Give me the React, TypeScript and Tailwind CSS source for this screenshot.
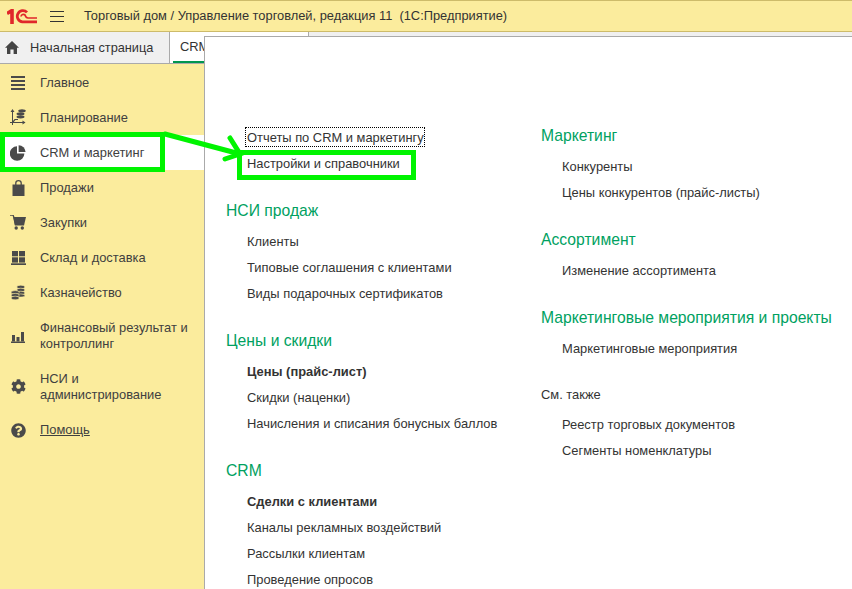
import { FaCog, FaQuestionCircle } from "react-icons/fa";

const iconColor = "#4a4a4a";

function Logo() {
  return (
    <svg width="30" height="15" viewBox="0 0 30 15" fill="none" stroke="#e0262a" className="block">
      <path d="M0 4.5 L5 1.5 V15" strokeWidth="3.6" />
      <path d="M20 3.4 A5.6 5.6 0 1 0 15.5 12.8 H30" strokeWidth="2.8" />
      <path d="M14 7.5 A2.4 2.4 0 0 1 18 6 Q19 9 21 9 H30" strokeWidth="1.7" />
    </svg>
  );
}

function HomeIcon() {
  return (
    <svg width="14" height="13" viewBox="0 0 14 13" fill="#444" className="ml-[5px] mr-[11px]">
      <path d="M7 0 L14 6.8 H12 V13 H8.6 V8.6 H5.4 V13 H2 V6.8 H0 Z" />
    </svg>
  );
}

function MenuIcon() {
  return (
    <svg width="14" height="14" viewBox="0 0 14 14" fill={iconColor}>
      <rect y="0" width="14" height="2" />
      <rect y="4" width="14" height="2" />
      <rect y="8" width="14" height="2" />
      <rect y="12" width="14" height="2" />
    </svg>
  );
}

function PlanIcon() {
  return (
    <svg width="16" height="17" viewBox="0 0 16 17" fill={iconColor}>
      <path d="M2.5 1 V16 M0 13.5 H15" fill="none" stroke={iconColor} strokeWidth="1" />
      <path d="M0.5 3 L2.5 0 L4.5 3 Z M12.5 11.5 L15.5 13.5 L12.5 15.5 Z" />
      <path d="M2.5 13.5 L5 10.5 H8" fill="none" stroke={iconColor} strokeWidth="1.2" />
      <ellipse cx="12" cy="1.8" rx="3.8" ry="1.6" />
      <ellipse cx="10.5" cy="4.8" rx="4" ry="1.6" />
      <ellipse cx="10.5" cy="7.8" rx="4" ry="1.6" />
    </svg>
  );
}

function PieIcon() {
  return (
    <svg width="16" height="16" viewBox="0 0 16 16" fill={iconColor}>
      <path d="M7 1.2 V8.6 H14.4 A7.3 7.3 0 1 1 7 1.2 Z" />
      <path d="M8.6 0.2 A7 7 0 0 1 15.6 7 H8.6 Z" />
    </svg>
  );
}

function BagIcon() {
  return (
    <svg width="13" height="16" viewBox="0 0 13 16" fill={iconColor}>
      <path d="M3.8 6 V3 A2.7 2.3 0 0 1 9.2 3 V6" fill="none" stroke={iconColor} strokeWidth="1.3" />
      <path d="M0.5 4.5 H12.5 V16 H0.5 Z" />
    </svg>
  );
}

function CartIcon() {
  return (
    <svg width="16" height="15" viewBox="0 0 16 15" fill={iconColor}>
      <path d="M0 0 H3 L3.6 1.5 L5.5 10" fill="none" stroke={iconColor} strokeWidth="1.3" />
      <path d="M3.4 2 H16 L14 10.5 H5 Z" />
      <circle cx="6.2" cy="13" r="1.7" />
      <circle cx="12.3" cy="13" r="1.7" />
    </svg>
  );
}

function GridIcon() {
  return (
    <svg width="15" height="14" viewBox="0 0 15 14" fill={iconColor}>
      <rect x="1" y="0" width="6" height="5.3" />
      <rect x="8" y="0" width="6" height="5.3" />
      <rect x="1" y="6.3" width="6" height="5.3" />
      <rect x="8" y="6.3" width="6" height="5.3" />
      <rect x="0" y="12.3" width="15" height="1.7" />
    </svg>
  );
}

function CoinsIcon() {
  return (
    <svg width="14" height="15" viewBox="0 0 14 15" fill={iconColor} stroke="#fbec9d" strokeWidth="0.6">
      <ellipse cx="9.8" cy="2" rx="4" ry="1.8" />
      <ellipse cx="9.8" cy="5" rx="4" ry="1.8" />
      <ellipse cx="9.8" cy="8" rx="4" ry="1.8" />
      <ellipse cx="9.8" cy="10.5" rx="4" ry="1.6" />
      <ellipse cx="4.2" cy="7.4" rx="4" ry="1.8" />
      <ellipse cx="4.2" cy="10.2" rx="4" ry="1.8" />
      <ellipse cx="4.2" cy="13" rx="4" ry="1.8" />
    </svg>
  );
}

function BarsIcon() {
  return (
    <svg width="14" height="14" viewBox="0 0 14 14" fill={iconColor}>
      <rect x="1" y="6" width="3" height="6.5" />
      <rect x="5.5" y="8" width="3" height="4.5" />
      <rect x="10" y="3" width="3" height="9.5" />
      <rect x="0" y="12.5" width="14" height="1.5" />
    </svg>
  );
}

const sideItems = [
  { label: "Главное", icon: <MenuIcon />, h: "h-[35px]" },
  { label: "Планирование", icon: <PlanIcon />, h: "h-[35px]" },
  { label: "CRM и маркетинг", icon: <PieIcon />, h: "h-[35px]", active: true },
  { label: "Продажи", icon: <BagIcon />, h: "h-[35px]" },
  { label: "Закупки", icon: <CartIcon />, h: "h-[35px]" },
  { label: "Склад и доставка", icon: <GridIcon />, h: "h-[35px]" },
  { label: "Казначейство", icon: <CoinsIcon />, h: "h-[35px]" },
  { label: "Финансовый результат и контроллинг", icon: <BarsIcon />, h: "h-[51px]" },
  { label: "НСИ и администрирование", icon: <FaCog size={15} color={iconColor} />, h: "h-[51px]" },
  { label: "Помощь", icon: <FaQuestionCircle size={15} color={iconColor} />, h: "h-[36px]", underline: true },
];

const leftCol = [
  { links: ["Отчеты по CRM и маркетингу", "Настройки и справочники"] },
  { title: "НСИ продаж", links: ["Клиенты", "Типовые соглашения с клиентами", "Виды подарочных сертификатов"] },
  { title: "Цены и скидки", links: ["*Цены (прайс-лист)", "Скидки (наценки)", "Начисления и списания бонусных баллов"] },
  { title: "CRM", links: ["*Сделки с клиентами", "Каналы рекламных воздействий", "Рассылки клиентам", "Проведение опросов"] },
];

const rightCol = [
  { title: "Маркетинг", links: ["Конкуренты", "Цены конкурентов (прайс-листы)"] },
  { title: "Ассортимент", links: ["Изменение ассортимента"] },
  { title: "Маркетинговые мероприятия и проекты", links: ["Маркетинговые мероприятия"] },
  { title: "См. также", small: true, links: ["Реестр торговых документов", "Сегменты номенклатуры"] },
];

function Section({ title, small, links }: { title?: string; small?: boolean; links: string[] }) {
  return (
    <div className="mb-4">
      {title && (
        <div
          className={
            small
              ? "flex h-[34px] items-center text-[12.9px] text-[#333]"
              : "flex h-[36px] items-center text-[15.7px] text-[#00a15f]"
          }
        >
          {title}
        </div>
      )}
      {links.map((link) => (
        <div key={link} className="flex h-[26px] items-center pl-[21px] text-[12.9px] text-[#333]">
          {link.startsWith("*") ? <b>{link.slice(1)}</b> : link}
        </div>
      ))}
    </div>
  );
}

export default function App() {
  return (
    <div className="relative flex h-screen flex-col overflow-hidden bg-white font-['Liberation_Sans',Arial,sans-serif] text-[12.9px] text-[#333]">
      <header className="flex h-[32px] shrink-0 items-center border-y border-y-[#cdbb6a] bg-[#fbec9d]">
        <div className="ml-[7px] flex w-[43px] items-center">
          <Logo />
        </div>
        <div className="flex w-[34px] flex-col gap-[4px]">
          <span className="h-px w-[14px] bg-[#333]" />
          <span className="h-px w-[14px] bg-[#333]" />
          <span className="h-px w-[14px] bg-[#333]" />
        </div>
        <span className="whitespace-pre text-[12.85px] text-[#333]">Торговый дом / Управление торговлей, редакция 11  (1С:Предприятие)</span>
      </header>

      <nav className="flex h-[32px] shrink-0 items-stretch border-b border-b-[#aaa] bg-[#f0f0f0]">
        <div className="flex w-[170px] items-center border-r border-r-[#aaa] text-[12.75px]">
          <HomeIcon />
          <span>Начальная страница</span>
        </div>
        <div className="flex w-[139px] border-r border-r-[#aaa] bg-white px-[3px]">
          <div className="flex w-full items-center border-b-2 border-b-[#00964f] pl-[7px] whitespace-nowrap">CRM и маркетинг</div>
        </div>
      </nav>

      <div className="flex min-h-0 flex-1">
        <aside className="w-[204px] shrink-0 bg-[#fbec9d] pt-px">
          {sideItems.map((item) => (
            <div key={item.label} className={`flex items-center ${item.h} ${item.active ? "bg-white" : ""}`}>
              <div className="flex w-[40px] shrink-0 items-center justify-center pr-[4px]">{item.icon}</div>
              <span className={`leading-[16px] pr-[8px] text-[#404040] ${item.underline ? "underline" : ""}`}>{item.label}</span>
            </div>
          ))}
        </aside>
      </div>

      {/* раздел открывается поверх вкладок */}
      <div className="absolute bottom-0 left-[204px] right-0 top-[36px] flex border-l border-t border-[#aaa] bg-white pl-[21px]">
        <div className="w-[315px] pt-[88px]">
          {leftCol.map((s, i) => (
            <Section key={i} {...s} />
          ))}
        </div>
        <div className="pt-[81px]">
          {rightCol.map((s, i) => (
            <Section key={i} {...s} />
          ))}
        </div>
      </div>

      {/* фокус на первой ссылке */}
      <div className="absolute left-[245px] top-[127px] h-[20px] w-[180px] border border-dotted border-black" />

      {/* зелёная разметка поверх скриншота */}
      <div className="absolute left-0 top-[132px] h-[40px] w-[165px] border-[5px] border-[#00f400]" />
      <div className="absolute left-[237px] top-[150px] h-[30px] w-[179px] border-[5px] border-[#00f400]" />
      <svg className="absolute left-[160px] top-[130px]" width="90" height="35" viewBox="0 0 90 35" fill="none" stroke="#00f400" strokeWidth="5" strokeLinecap="round">
        <path d="M5 4 L80 24" />
        <path d="M70 8 L80 24 L65 29" />
      </svg>
    </div>
  );
}
